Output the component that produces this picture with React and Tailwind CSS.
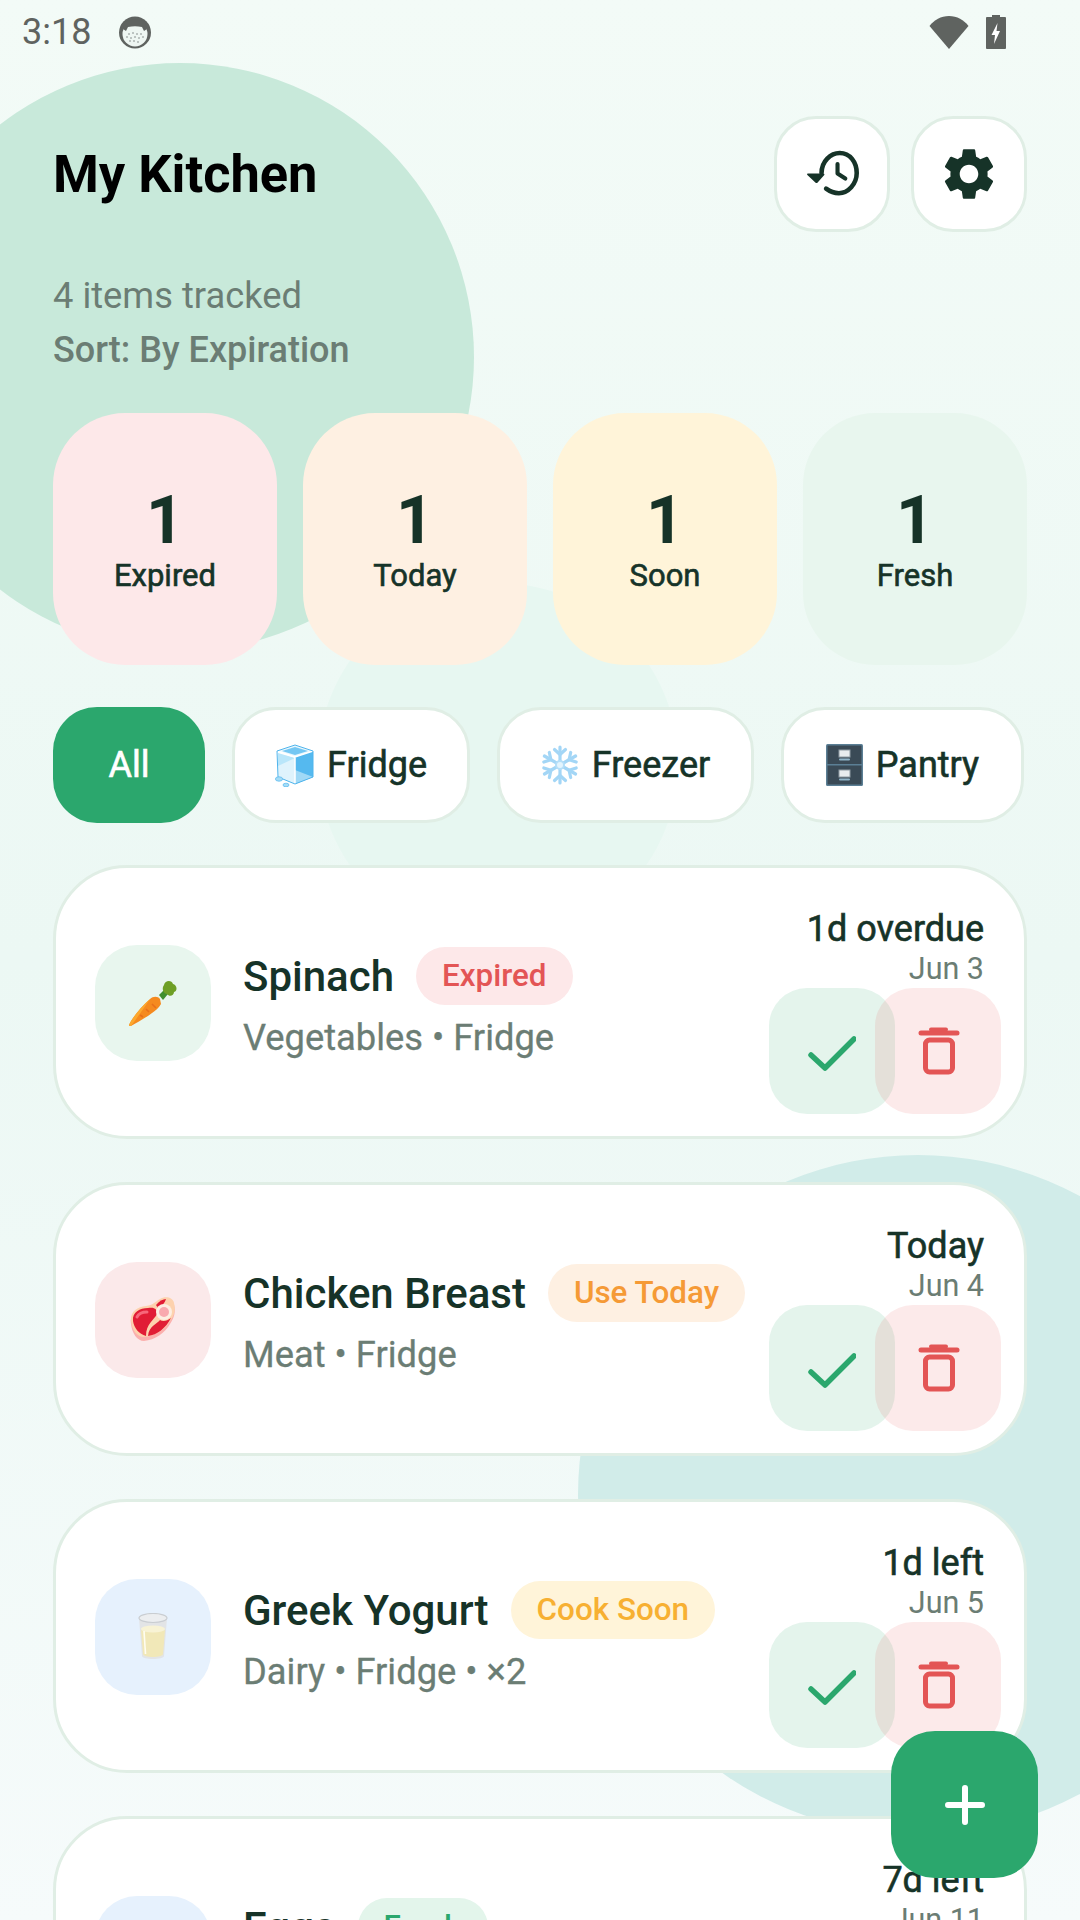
import React from 'react';

const Carrot = () => (
  <svg width="50" height="46" viewBox="0 0 50 46">
    <path d="M31 15 L36 10 L40 14 L35 20 Z" fill="#3f8f2f" />
    <path d="M36 5 C37 0 44 0 45 4 C49 5 50 11 46 12 C46 16 41 17 39 14 C36 14 33 9 36 5 Z" fill="#6e9f25" />
    <path d="M1 45 C4 38 13 27 22 19 C25 16 30 16 32 19 L33 24 C31 28 27 31 24 33 C16 39 8 43 3 46 C2 46 1 46 1 45 Z" fill="#f58a1f" />
    <path d="M1 45 C4 38 13 27 22 19 C16 28 9 38 3 46 C2 46 1 46 1 45 Z" fill="#fca82e" />
    <path d="M24 24 L28 28 M18 29 L21 32 M12 35 L15 37" stroke="#e8701a" strokeWidth="1.6" />
  </svg>
);

const Meat = () => (
  <svg width="48" height="46" viewBox="0 0 48 46">
    <path d="M2 27 C0 18 8 13 17 12 C24 11 26 8 31 4 C36 0 44 1 45 8 C47 15 45 21 41 27 C36 36 26 43 15 44 C8 44 3 36 2 27 Z" fill="#fbb0ae" />
    <path d="M2 24 C1 15 8 10 17 9 C24 8 26 5 31 2 C36 -1 44 0 45 6 C47 13 45 19 41 24 C36 33 26 39 15 40 C8 40 3 33 2 24 Z" fill="#fdd2ae" />
    <path d="M4 24 C3 15 11 11 19 11 C26 10 28 12 28 17 C25 23 17 27 17 39 C10 37 5 31 4 24 Z" fill="#e11d35" />
    <path d="M19 39 C20 29 28 27 31 23 C34 25 38 24 42 21 C37 31 28 38 19 39 Z" fill="#e11d35" />
    <path d="M27 8 C30 4 34 2 37 2 C36 6 33 9 29 11 Z" fill="#e11d35" />
    <path d="M8 20 C10 16 14 15 18 15" stroke="#f7687a" strokeWidth="3" fill="none" strokeLinecap="round" />
    <circle cx="35" cy="15" r="8" fill="#fdeee2" />
    <circle cx="35" cy="15" r="5" fill="#f9a9ae" />
  </svg>
);

const Glass = () => (
  <svg width="30" height="48" viewBox="0 0 30 48">
    <path d="M1 5 L4 43 C4 47 26 47 26 43 L29 5 Z" fill="#e2e4e6" />
    <path d="M3 17 L5 41 C5 45 25 45 25 41 L27 17 C22 19 8 19 3 17 Z" fill="#f1e8b8" />
    <ellipse cx="15" cy="16" rx="12" ry="3.5" fill="#f8f3d5" />
    <ellipse cx="15" cy="5" rx="14" ry="4.5" fill="#eceef0" stroke="#c9cdd1" strokeWidth="1.2" />
    <path d="M6 18 L7.5 41" stroke="#fffdf0" strokeWidth="1.6" />
  </svg>
);

const Egg = () => (
  <svg width="36" height="46" viewBox="0 0 36 46">
    <path d="M18 2 C27 2 34 17 34 28 C34 38 27 44 18 44 C9 44 2 38 2 28 C2 17 9 2 18 2 Z" fill="#f3dcc0" />
  </svg>
);

const IceCube = () => (
  <svg width="39" height="43" viewBox="0 0 39 43">
    <path d="M3 9 L20 14 L20 40 L3 33 Z" fill="#b9e6fa" />
    <path d="M3 22 L20 14 L20 40 L3 33 Z" fill="#dff3fc" />
    <path d="M20 13 L38 7 L38 33 L20 40 Z" fill="#55b9ef" />
    <path d="M20 26 L38 33 L20 40 Z" fill="#a0d9f6" />
    <path d="M2 7 L20 1 L38 7 L20 13 Z" fill="#e8f7fe" />
    <path d="M7 7 L20 3 L33 7 L20 11 Z" fill="#74c7f3" />
    <path d="M20 13 V40 M2 7 L20 13 L38 7" stroke="#fff" strokeWidth="1.500" fill="none" />
    <path d="M2 7 L20 1 L38 7 L38 33 L20 40 L3 33 Z" stroke="#4fb4ec" strokeWidth="1" fill="none" />
    <ellipse cx="4" cy="35" rx="3.600" ry="2.200" fill="#a4dcf6" stroke="#62bdf0" strokeWidth=".8" />
    <ellipse cx="11" cy="41" rx="3" ry="1.800" fill="#a4dcf6" stroke="#62bdf0" strokeWidth=".8" />
  </svg>
);

const Snowflake = () => {
  const arm = (
    <g>
      <path d="M19 21 V3" />
      <path d="M13.500 5.500 L19 10.500 L24.500 5.500" />
    </g>
  );
  return (
    <svg width="38" height="42" viewBox="0 0 38 42" fill="none" stroke="#a3d6f6" strokeWidth="3.200" strokeLinecap="round" strokeLinejoin="round">
      {[0, 60, 120, 180, 240, 300].map((a) => (
        <g key={a} transform={`rotate(${a} 19 21)`}>{arm}</g>
      ))}
      <circle cx="19" cy="21" r="4" fill="#e3f4fd" stroke="#b4def8" strokeWidth="2" />
    </svg>
  );
};

const Cabinet = () => (
  <svg width="37" height="42" viewBox="0 0 37 42">
    <rect x="0" y="0" width="37" height="42" rx="1.500" fill="#5b7f95" />
    <rect x="1.500" y="1.500" width="34" height="18.500" fill="#3a4a56" />
    <rect x="1.500" y="21.500" width="34" height="19" fill="#3a4a56" />
    <rect x="13" y="6" width="11" height="7" fill="#e8ecee" stroke="#8f9ca4" strokeWidth="1" />
    <rect x="13" y="26" width="11" height="7" fill="#e8ecee" stroke="#8f9ca4" strokeWidth="1" />
    <path d="M14 15.500 H23 M14 35.500 H23" stroke="#8fb4c8" strokeWidth="2" strokeLinecap="round" />
  </svg>
);

const HistoryIcon = () => (
  <svg width="53" height="48" viewBox="0 0 58 52" className="text-[#163328]">
    <path d="M17 25 C17 12 27 3 37 3 C48 3 55.500 13 55.500 25 C55.500 37 46 47 36 47 C30 47 26 45 22 42" fill="none" stroke="currentColor" strokeWidth="5" strokeLinecap="round" />
    <path d="M2 25.500 H19 C20 25.500 20.500 26.500 20 27 L12.500 35.500 C12 36 11 36 10.500 35.500 L1.500 27 C1 26.500 1 25.500 2 25.500 Z" fill="currentColor" />
    <path d="M34.500 15 V25.500 L43 31" fill="none" stroke="currentColor" strokeWidth="4.500" strokeLinecap="round" strokeLinejoin="round" />
  </svg>
);

const GearIcon = () => (
  <svg width="62" height="62" viewBox="0 0 24 24" fill="#163328">
    <path d="M19.14 12.94c.04-.3.06-.61.06-.94 0-.32-.02-.64-.07-.94l2.03-1.58c.18-.14.23-.41.12-.61l-1.92-3.32c-.12-.22-.37-.29-.59-.22l-2.39.96c-.5-.38-1.03-.7-1.62-.94l-.36-2.54c-.04-.24-.24-.41-.48-.41h-3.84c-.24 0-.43.17-.47.41l-.36 2.54c-.59.24-1.13.57-1.62.94l-2.39-.96c-.22-.08-.47 0-.59.22L2.74 8.87c-.12.21-.08.47.12.61l2.03 1.58c-.05.3-.09.63-.09.94s.02.64.07.94l-2.03 1.58c-.18.14-.23.41-.12.61l1.92 3.32c.12.22.37.29.59.22l2.39-.96c.5.38 1.03.7 1.62.94l.36 2.54c.05.24.24.41.48.41h3.84c.24 0 .44-.17.47-.41l.36-2.54c.59-.24 1.13-.56 1.62-.94l2.39.96c.22.08.47 0 .59-.22l1.92-3.32c.12-.22.07-.47-.12-.61l-2.01-1.58zM12 15.6c-1.98 0-3.6-1.62-3.6-3.600s1.620-3.600 3.600-3.600 3.600 1.620 3.600 3.600-1.620 3.600-3.600 3.600z" />
  </svg>
);

const CheckIcon = () => (
  <svg width="48" height="48" viewBox="0 0 48 48" fill="none" stroke="#2ba76d" strokeWidth="5.500" strokeLinecap="round" strokeLinejoin="round">
    <path d="M3 28 L17 41 L46 12" />
  </svg>
);

const TrashIcon = () => (
  <svg width="50" height="50" viewBox="0 0 50 50" fill="none" stroke="#e35555" strokeWidth="5" strokeLinecap="round" strokeLinejoin="round">
    <path d="M8 7 H44" />
    <path d="M18 3.500 H33" strokeWidth="4" />
    <rect x="12.500" y="14" width="27" height="32" rx="4" />
  </svg>
);

const CatIcon = () => (
  <svg width="32" height="33" viewBox="0 0 32 33">
    <circle cx="16" cy="16.500" r="16" fill="#5f6360" />
    <circle cx="16" cy="18" r="12.500" fill="#eef6f2" />
    <path d="M4 13 L6 6 C12 3 20 3 26 6 L28 13 L25 15 L23 11 C18 10 14 10 9 11 L7 15 Z" fill="#5f6360" />
    <g fill="#7d8582">
      <circle cx="10" cy="18" r=".8" /><circle cx="14" cy="17" r=".8" /><circle cx="18" cy="18" r=".8" /><circle cx="22" cy="18" r=".8" />
      <circle cx="8" cy="21" r=".8" /><circle cx="12" cy="22" r=".8" /><circle cx="16" cy="21" r=".8" /><circle cx="20" cy="22" r=".8" /><circle cx="24" cy="21" r=".8" />
      <circle cx="11" cy="25" r=".8" /><circle cx="15" cy="25" r=".8" /><circle cx="19" cy="26" r=".8" />
    </g>
  </svg>
);

const WifiIcon = () => (
  <svg width="40" height="33" viewBox="0 0 40 33">
    <path d="M20 33 L0.500 10 C5 4 12 0 20 0 C28 0 35 4 39.500 10 Z" fill="#5f6360" />
  </svg>
);

const BatteryIcon = () => (
  <svg width="20" height="34" viewBox="0 0 20 34">
    <path d="M6 0 H14 V2 H19 C19.500 2 20 2.500 20 3 V33 C20 33.500 19.500 34 19 34 H1 C0.500 34 0 33.500 0 33 V3 C0 2.500 0.500 2 1 2 H6 Z" fill="#5f6360" />
    <path d="M11.500 8 L5.500 20 H9 L8 29 L14 16 H10.500 Z" fill="#fff" />
  </svg>
);

const stats = [
  { n: '1', label: 'Expired', bg: 'bg-[#fde8e9]' },
  { n: '1', label: 'Today', bg: 'bg-[#fef0e2]' },
  { n: '1', label: 'Soon', bg: 'bg-[#fff4d9]' },
  { n: '1', label: 'Fresh', bg: 'bg-[#e8f6ee]' },
];

const filters = [
  { label: 'Fridge', icon: <IceCube />, w: 'w-[238px]' },
  { label: 'Freezer', icon: <Snowflake />, w: 'w-[257px]' },
  { label: 'Pantry', icon: <Cabinet />, w: 'w-[243px]' },
];

const items = [
  { name: 'Spinach', badge: 'Expired', badgeCls: 'bg-[#fde8e9] text-[#e35555]', sub: 'Vegetables • Fridge', due: '1d overdue', date: 'Jun 3', tile: 'bg-[#e8f6ee]', icon: <Carrot /> },
  { name: 'Chicken Breast', badge: 'Use Today', badgeCls: 'bg-[#fef0e2] text-[#f59a36]', sub: 'Meat • Fridge', due: 'Today', date: 'Jun 4', tile: 'bg-[#fbe9ea]', icon: <Meat /> },
  { name: 'Greek Yogurt', badge: 'Cook Soon', badgeCls: 'bg-[#fff4d9] text-[#f7b032]', sub: 'Dairy • Fridge • ×2', due: '1d left', date: 'Jun 5', tile: 'bg-[#e6f1fd]', icon: <Glass /> },
  { name: 'Eggs', badge: 'Fresh', badgeCls: 'bg-[#e3f5eb] text-[#2ba76d]', sub: 'Dairy • Fridge', due: '7d left', date: 'Jun 11', tile: 'bg-[#e6f1fd]', icon: <Egg /> },
];

function ItemCard({ item }) {
  return (
    <div className="flex h-[274px] w-[974px] shrink-0 items-center justify-between rounded-[74px] border-[3px] border-[#e0eee5] bg-white pl-[39px] pr-[23px] pt-[2px]">
      <div className="flex items-center">
        <div className={`flex h-[116px] w-[116px] items-center justify-center rounded-[42px] ${item.tile}`}>{item.icon}</div>
        <div className="ml-[32px] mt-[9px] flex flex-col">
          <div className="flex items-center">
            <span className="text-[42px] leading-[58px] font-medium text-[#163328]">{item.name}</span>
            <span className={`-mt-[2px] ml-[22px] flex h-[58px] items-center rounded-full px-[26px] text-[31.400px] font-medium ${item.badgeCls}`}>{item.badge}</span>
          </div>
          <span className="mt-[2px] text-[36.300px] leading-[60px] text-[#6b7d74] [-webkit-text-stroke:0.3px]">{item.sub}</span>
        </div>
      </div>
      <div className="flex flex-col items-end self-end pb-[22px]">
        <span className="mr-[17px] text-[36px] leading-[44px] text-[#163328] [-webkit-text-stroke:0.6px]">{item.due}</span>
        <span className="mr-[17px] text-[30.500px] leading-[36px] text-[#6b7d74]">{item.date}</span>
        <div className="mt-[1px] flex">
          <div className="flex h-[126px] w-[126px] items-center justify-center rounded-[38px] bg-[#2ba76d]/[0.13]"><CheckIcon /></div>
          <div className="-ml-[20px] flex h-[126px] w-[126px] items-center justify-center rounded-[38px] bg-[#e35555]/[0.12]"><TrashIcon /></div>
        </div>
      </div>
    </div>
  );
}

export default function App() {
  return (
    <div className="relative h-[1920px] w-[1080px] overflow-hidden bg-linear-to-b from-[#f3fbf7] via-[#ecf8f4] to-[#f6fbfb] font-[Roboto,sans-serif]">
      <div className="absolute -left-[114px] top-[63px] h-[588px] w-[588px] rounded-full bg-[#c8e9da]" />
      <div className="absolute left-[318px] top-[583px] h-[360px] w-[360px] rounded-full bg-[#e7f7f1]" />
      <div className="absolute left-[578px] top-[1155px] h-[680px] w-[680px] rounded-full bg-[#d1ece9]" />

      <div className="relative flex h-full flex-col">
        <div className="flex h-[64px] shrink-0 items-center justify-between pl-[22px] pr-[74px]">
          <div className="flex items-center">
            <span className="text-[36px] text-[#5f6360]">3:18</span>
            <span className="ml-[28px] flex"><CatIcon /></span>
          </div>
          <div className="flex items-center gap-[17px]">
            <WifiIcon />
            <BatteryIcon />
          </div>
        </div>

        <div className="mt-[52px] flex shrink-0 items-center justify-between px-[53px]">
          <h1 className="text-[52.400px] leading-[60px] font-bold text-black">My Kitchen</h1>
          <div className="flex gap-[21px]">
            <div className="flex h-[116px] w-[116px] items-center justify-center rounded-[42px] border-[3px] border-[#e0eee5] bg-white"><HistoryIcon /></div>
            <div className="flex h-[116px] w-[116px] items-center justify-center rounded-[42px] border-[3px] border-[#e0eee5] bg-white"><GearIcon /></div>
          </div>
        </div>

        <div className="mt-[37px] flex shrink-0 flex-col px-[53px] text-[36.300px] leading-[54px] text-[#6b7d74]">
          <span>4 items tracked</span>
          <span className="text-[36px] font-medium">Sort: By Expiration</span>
        </div>

        <div className="mt-[36px] flex shrink-0 justify-between px-[53px]">
          {stats.map((s) => (
            <div key={s.label} className={`flex h-[252px] w-[224px] flex-col items-center justify-center rounded-[72px] ${s.bg}`}>
              <span className="mt-[2px] text-[66px] leading-[72px] font-bold text-[#163328]">{s.n}</span>
              <span className="-mt-[1px] text-[31px] leading-[40px] text-[#163328] [-webkit-text-stroke:0.6px]">{s.label}</span>
            </div>
          ))}
        </div>

        <div className="mt-[42px] flex shrink-0 gap-[27px] px-[53px]">
          <div className="flex h-[116px] w-[152px] items-center justify-center rounded-[44px] bg-[#2ba76d] text-[36px] text-white [-webkit-text-stroke:0.6px]">All</div>
          {filters.map((f) => (
            <div key={f.label} className={`flex h-[116px] items-center justify-center gap-[13px] rounded-[44px] border-[3px] border-[#e0eee5] bg-white text-[36px] text-[#163328] [-webkit-text-stroke:0.6px] ${f.w}`}>
              {f.icon}
              <span>{f.label}</span>
            </div>
          ))}
        </div>

        <div className="mt-[42px] flex flex-col gap-[43px] px-[53px]">
          {items.map((it) => <ItemCard key={it.name} item={it} />)}
        </div>
      </div>

      <div className="absolute left-[891px] top-[1731px] flex h-[147px] w-[147px] items-center justify-center rounded-[44px] bg-[#2ba76d]">
        <svg width="40" height="40" viewBox="0 0 40 40" fill="none" stroke="#fff" strokeWidth="6" strokeLinecap="round">
          <path d="M20 3 V37 M3 20 H37" />
        </svg>
      </div>
    </div>
  );
}
